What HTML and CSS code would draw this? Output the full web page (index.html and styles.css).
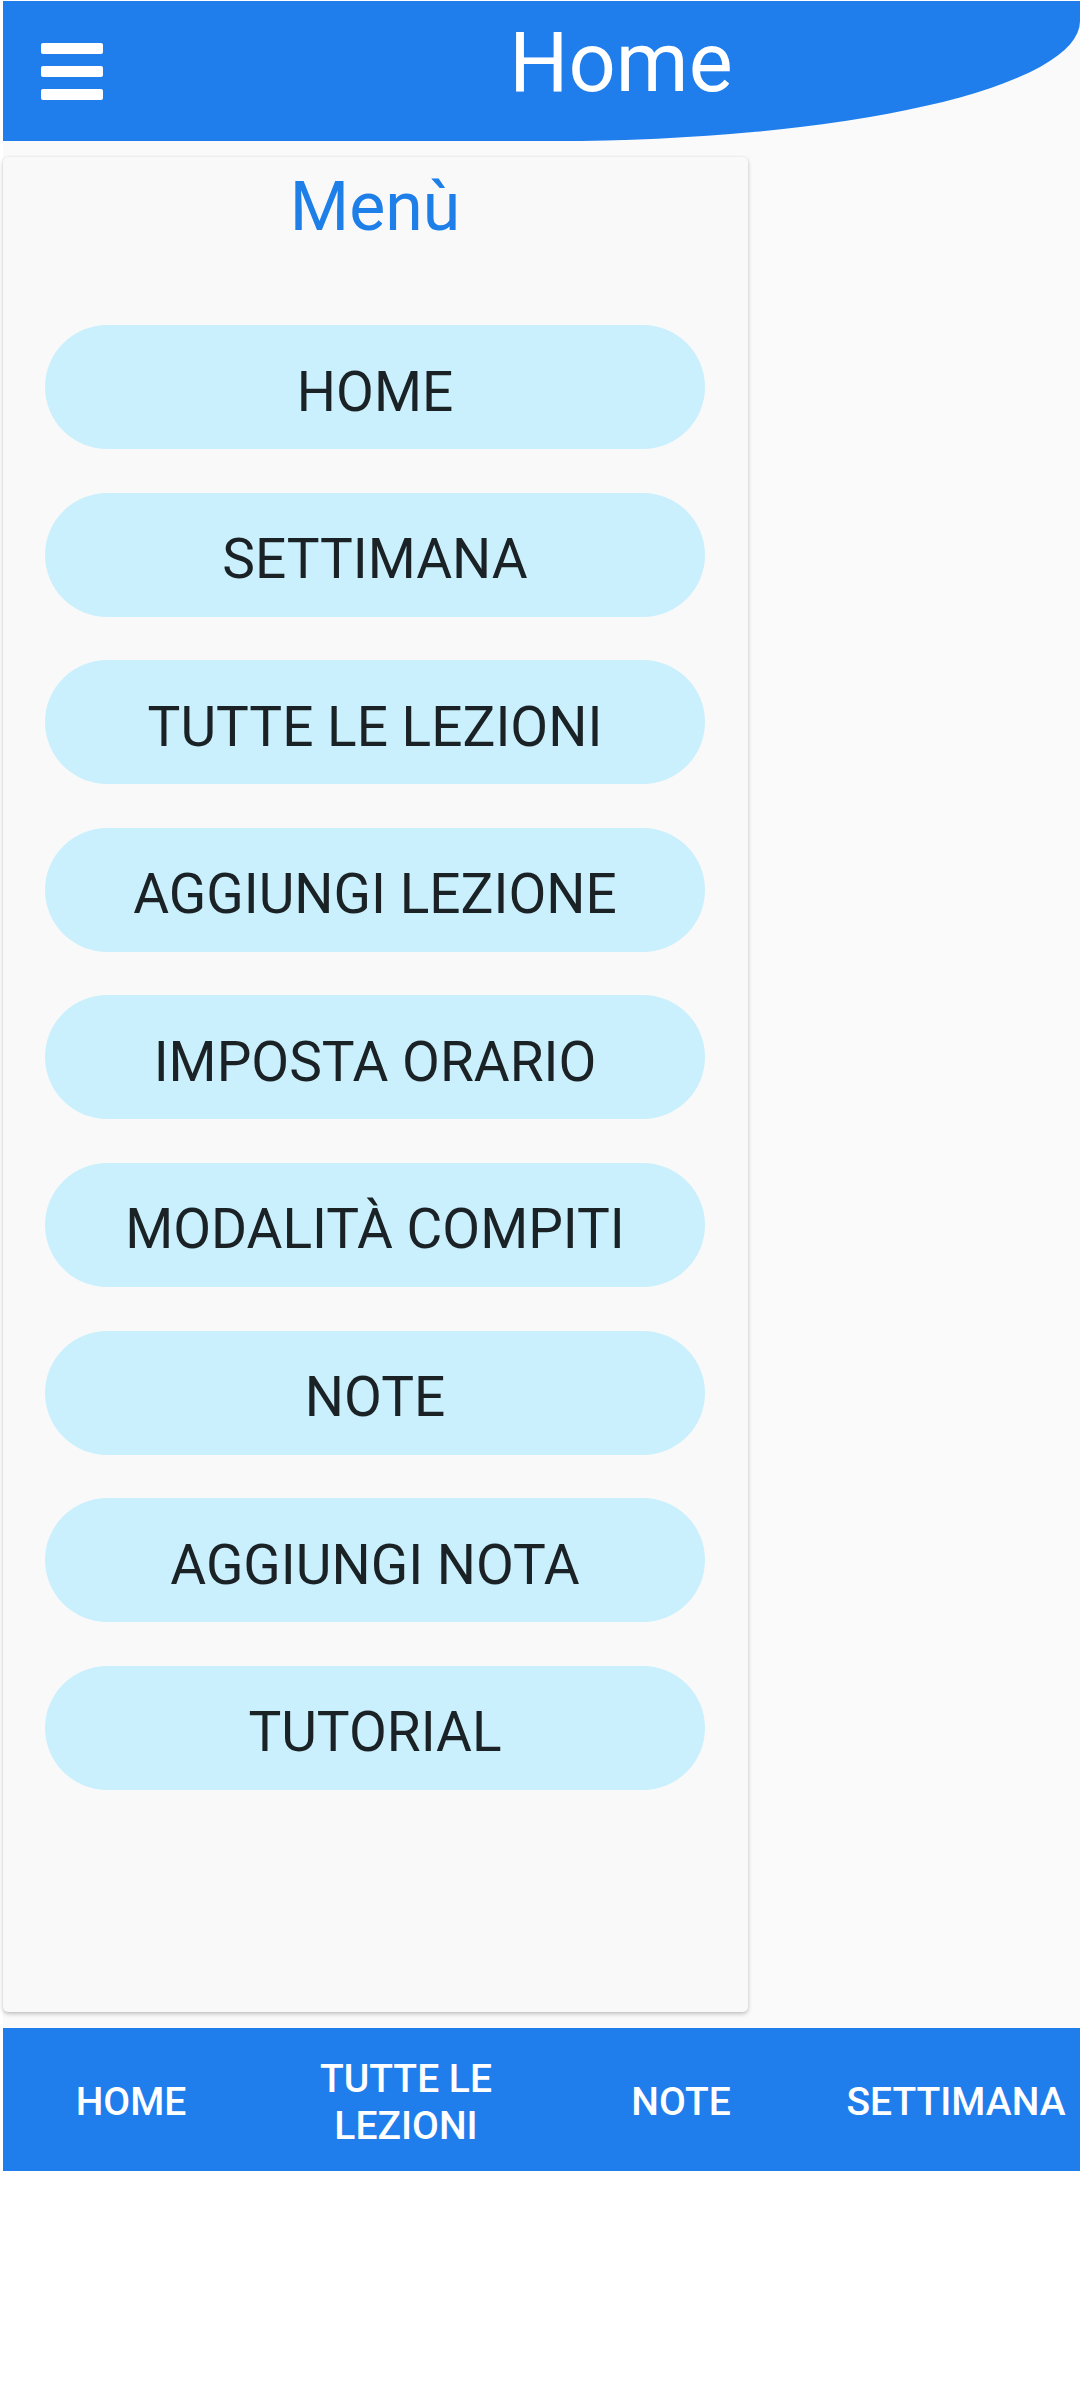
FILE: index.html
```html
<!DOCTYPE html>
<html lang="it">
<head>
<meta charset="utf-8">
<title>Home</title>
<link rel="stylesheet" href="styles.css">
</head>
<body>
<div class="app">
  <header class="topbar">
    <div class="burger" aria-label="menu">
      <span class="bar"></span>
      <span class="bar"></span>
      <span class="bar"></span>
    </div>
    <h1 class="title">Home</h1>
  </header>
  <main class="content">
    <section class="menu">
      <h2 class="menu-title">Menù</h2>
      <div class="menu-list">
        <div class="menu-btn">HOME</div>
        <div class="menu-btn">SETTIMANA</div>
        <div class="menu-btn">TUTTE LE LEZIONI</div>
        <div class="menu-btn">AGGIUNGI LEZIONE</div>
        <div class="menu-btn">IMPOSTA ORARIO</div>
        <div class="menu-btn">MODALITÀ COMPITI</div>
        <div class="menu-btn">NOTE</div>
        <div class="menu-btn">AGGIUNGI NOTA</div>
        <div class="menu-btn">TUTORIAL</div>
      </div>
    </section>
  </main>
  <nav class="bottom-nav">
    <div class="nav-track">
      <div class="nav-item">HOME</div>
      <div class="nav-item">TUTTE LE<br>LEZIONI</div>
      <div class="nav-item">NOTE</div>
      <div class="nav-item">SETTIMANA</div>
    </div>
  </nav>
</div>
</body>
</html>
```
FILE: styles.css
```css
html, body {
  margin: 0;
  padding: 0;
  background: #ffffff;
}

body {
  font-family: Roboto, "Noto Sans", "Liberation Sans", sans-serif;
}

.app {
  margin: 1px 0 0 3px;
  background: #fafafa;
}

.topbar {
  height: 140px;
  background: #1f7eec;
  border-bottom-right-radius: 525px 120px;
  display: flex;
  align-items: flex-start;
  padding-left: 38px;
  box-sizing: border-box;
}

.burger {
  margin-top: 42px;
  width: 62px;
  display: flex;
  flex-direction: column;
  gap: 12px;
}

.bar {
  display: block;
  height: 11px;
  background: #ffffff;
  border-radius: 2px;
}

.title {
  flex: 1;
  margin: 13px 0 0 59px;
  text-align: center;
  color: #ffffff;
  font-size: 83px;
  font-weight: 400;
  line-height: 97px;
}

.content {
  padding: 16px 0;
}

.menu {
  width: 745px;
  height: 1855px;
  box-sizing: border-box;
  background: #f9f9f9;
  border-radius: 5px;
  box-shadow: 0 2px 4px rgba(0, 0, 0, 0.22), 0 0 2px rgba(0, 0, 0, 0.08);
  padding: 10px 43px 0 42px;
}

.menu-title {
  margin: 0;
  text-align: center;
  color: #1e7fe8;
  font-size: 68px;
  font-weight: 400;
  line-height: 80px;
}

.menu-list {
  margin-top: 78px;
  display: flex;
  flex-direction: column;
  gap: 43.6px;
}

.menu-btn {
  height: 124px;
  box-sizing: border-box;
  padding-top: 9px;
  border-radius: 62px;
  background: #caf0fd;
  color: #1a2226;
  font-size: 55px;
  display: flex;
  align-items: center;
  justify-content: center;
}

.bottom-nav {
  height: 143px;
  background: #1f7eec;
  overflow: hidden;
}

.nav-track {
  height: 100%;
  box-sizing: border-box;
  padding-top: 6px;
  margin-left: -9.5px;
  display: grid;
  grid-template-columns: repeat(4, 275px);
}

.nav-item {
  display: flex;
  align-items: center;
  justify-content: center;
  text-align: center;
  color: #ffffff;
  font-size: 39px;
  font-weight: 500;
  line-height: 47px;
}
```
